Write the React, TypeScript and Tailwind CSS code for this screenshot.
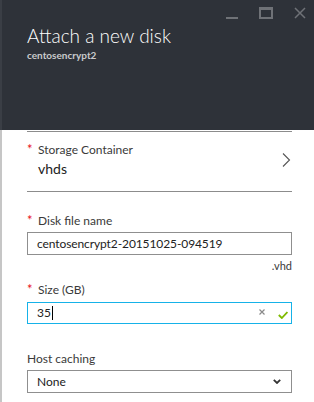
const font = { fontFamily: '"Lato", "Open Sans", sans-serif' };

function Label({ text, required }: { text: string; required?: boolean }) {
  return (
    <div className="flex items-start text-[12px] leading-[16px] text-[#3a3a3a]">
      {required && <span className="w-[11px] text-[#e81123] text-[13px] leading-[14px]">*</span>}
      <span>{text}</span>
    </div>
  );
}

export default function App() {
  return (
    <div className="w-[314px] h-[402px] overflow-hidden flex bg-white" style={font}>
      <div className="w-[2px] flex flex-col">
        <div className="h-[130px] bg-[#3a3e45]" />
        <div className="flex-1 bg-[#c6c6c6]" />
      </div>
      <div className="flex-1 flex flex-col">
        <div className="relative h-[130px] bg-[#2e3239] pl-[25px] pt-[24px]">
          {/* window controls */}
          <div className="absolute top-[7px] right-[8px] flex items-start gap-[21px]">
            <div className="mt-[10px] w-[12px] h-[2px] bg-[#6f7277]" />
            <div className="w-[14px] h-[12px] border-[2px] border-t-[3px] border-[#6f7277]" />
            <svg width="12" height="12" viewBox="0 0 12 12" className="text-[#6f7277]">
              <path d="M1 1 11 11M11 1 1 11" stroke="currentColor" strokeWidth="1.5" />
            </svg>
          </div>
          <div className="text-[19px] leading-[24px] text-white font-light">Attach a new disk</div>
          <div className="text-[10px] leading-[14px] text-[#c9cacc] font-bold">centosencrypt2</div>
        </div>

        <div className="pl-[25px] pr-[22px]">
          <div className="border-t border-[#8c8c8c] mt-[1px]" />
          <div className="flex items-center justify-between pt-[10px] pb-[13px] border-b border-[#8c8c8c]">
            <div>
              <Label text="Storage Container" required />
              <div className="pl-[11px] text-[14px] leading-[18px] text-[#222] mt-[2px]">vhds</div>
            </div>
            <svg width="10" height="16" viewBox="0 0 10 16" className="text-[#555] mr-[1px]">
              <path d="M2 1.5 8.5 8 2 14.5" fill="none" stroke="currentColor" strokeWidth="1.1" />
            </svg>
          </div>

          <div className="mt-[21px]">
            <Label text="Disk file name" required />
            <div className="mt-[3px] h-[23px] border border-[#8f8f8f] flex items-center pl-[9px] text-[12px] leading-[18px] tracking-[-0.1px] text-[#222]">
              centosencrypt2-20151025-094519
            </div>
            <div className="text-right text-[11px] leading-[14px] text-[#3a3a3a] mt-[4px]">.vhd</div>
          </div>

          <div className="mt-[9px]">
            <Label text="Size (GB)" required />
            <div className="mt-[4px] h-[22px] border border-[#16b2e8] flex items-center pl-[9px] pr-[3px] text-[12px] leading-[18px] text-[#222]">
              <span>35</span>
              <span className="w-px h-[14px] bg-black ml-[1px]" />
              <span className="flex-1" />
              <svg width="6" height="6" viewBox="0 0 6 6" className="text-[#8a8a8a] mr-[13px] -mt-[2px]">
                <path d="M0.5 0.5 5.5 5.5M5.5 0.5 0.5 5.5" stroke="currentColor" strokeWidth="1.2" />
              </svg>
              <svg width="10" height="8" viewBox="0 0 10 8" className="text-[#7fba00] mt-[3px]">
                <path d="M0.8 4 3.8 7 9.4 1" fill="none" stroke="currentColor" strokeWidth="1.8" />
              </svg>
            </div>
          </div>

          <div className="mt-[27px]">
            <Label text="Host caching" />
            <div className="mt-[3px] h-[23px] border border-[#8f8f8f] flex items-center justify-between pl-[9px] pr-[10px] text-[12px] leading-[18px] text-[#222]">
              <span>None</span>
              <svg width="8" height="5" viewBox="0 0 8 5" className="text-[#333]">
                <path d="M0.8 0.8 4 4 7.2 0.8" fill="none" stroke="currentColor" strokeWidth="1.8" />
              </svg>
            </div>
          </div>
        </div>
      </div>
    </div>
  );
}
